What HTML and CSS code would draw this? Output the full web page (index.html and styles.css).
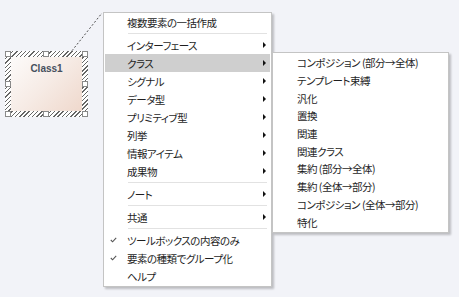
FILE: index.html
```html
<!DOCTYPE html>
<html lang="ja">
    <head>
        <meta charset="UTF-8" />
        <meta name="viewport" content="width=device-width, initial-scale=1.0" />
        <title>diagram context menu</title>
        <link rel="stylesheet" href="styles.css">
    </head>
    <body>
        <main class="canvas">
            <svg class="link" width="459" height="297" viewBox="0 0 459 297">
                <line x1="67" y1="57" x2="102" y2="13" />
            </svg>
            <div class="element">
                <div class="element-body">Class1</div>
                <span class="handle h-tl"></span>
                <span class="handle h-tc"></span>
                <span class="handle h-tr"></span>
                <span class="handle h-ml"></span>
                <span class="handle h-mr"></span>
                <span class="handle h-bl"></span>
                <span class="handle h-bc"></span>
                <span class="handle h-br"></span>
            </div>
            <ul class="menu menu-main">
                <li class="item"><span class="gutter"></span>複数要素の一括作成</li>
                <li class="sep"></li>
                <li class="item sub"><span class="gutter"></span>インターフェース<i class="arrow"></i></li>
                <li class="item sub active"><span class="gutter"></span>クラス<i class="arrow"></i></li>
                <li class="item sub"><span class="gutter"></span>シグナル<i class="arrow"></i></li>
                <li class="item sub"><span class="gutter"></span>データ型<i class="arrow"></i></li>
                <li class="item sub"><span class="gutter"></span>プリミティブ型<i class="arrow"></i></li>
                <li class="item sub"><span class="gutter"></span>列挙<i class="arrow"></i></li>
                <li class="item sub"><span class="gutter"></span>情報アイテム<i class="arrow"></i></li>
                <li class="item sub"><span class="gutter"></span>成果物<i class="arrow"></i></li>
                <li class="sep"></li>
                <li class="item sub"><span class="gutter"></span>ノート<i class="arrow"></i></li>
                <li class="sep"></li>
                <li class="item sub"><span class="gutter"></span>共通<i class="arrow"></i></li>
                <li class="sep"></li>
                <li class="item"><span class="gutter"><svg class="check" width="7" height="6" viewBox="0 0 7 6"><polyline points="0.8,3 2.6,4.8 6.2,0.8" /></svg></span>ツールボックスの内容のみ</li>
                <li class="item"><span class="gutter"><svg class="check" width="7" height="6" viewBox="0 0 7 6"><polyline points="0.8,3 2.6,4.8 6.2,0.8" /></svg></span>要素の種類でグループ化</li>
                <li class="item"><span class="gutter"></span>ヘルプ</li>
            </ul>
            <ul class="menu menu-sub">
                <li class="item">コンポジション (部分→全体)</li>
                <li class="item">テンプレート束縛</li>
                <li class="item">汎化</li>
                <li class="item">置換</li>
                <li class="item">関連</li>
                <li class="item">関連クラス</li>
                <li class="item">集約 (部分→全体)</li>
                <li class="item">集約 (全体→部分)</li>
                <li class="item">コンポジション (全体→部分)</li>
                <li class="item">特化</li>
            </ul>
        </main>
    </body>
</html>
```

FILE: styles.css
```css
* {
    box-sizing: border-box;
}
body {
    margin: 0;
    background-color: #f2f3f8;
    color: #1e1e1e;
    font-family: "Noto Sans CJK JP", "Noto Sans", sans-serif;
}
.canvas {
    position: relative;
    width: 459px;
    height: 297px;
    overflow: hidden;
}
.link {
    position: absolute;
    left: 0;
    top: 0;
}
.link line {
    stroke: #505050;
    stroke-width: 1;
    stroke-dasharray: 2 2;
}
.element {
    position: absolute;
    left: 5px;
    top: 51px;
    width: 83px;
    height: 66px;
    padding: 6px;
    background: repeating-linear-gradient(-45deg, #666 0 1px, #ffffff 1px 3px);
}
.element-body {
    height: 100%;
    padding-top: 6px;
    background: linear-gradient(135deg, #fdfbfa 0%, #f6ebe5 50%, #efd8cc 100%);
    color: #46505e;
    font-family: "Liberation Sans", Arial, sans-serif;
    font-size: 10px;
    font-weight: bold;
    line-height: 12px;
    text-align: center;
}
.handle {
    position: absolute;
    width: 6px;
    height: 6px;
    border: 1px solid #8a8a8a;
    background-color: #fff;
}
.h-tl { left: 0; top: 0; }
.h-tc { left: 38px; top: 0; }
.h-tr { right: 0; top: 0; }
.h-ml { left: 0; top: 30px; }
.h-mr { right: 0; top: 30px; }
.h-bl { left: 0; bottom: 0; }
.h-bc { left: 38px; bottom: 0; }
.h-br { right: 0; bottom: 0; }
.menu {
    position: absolute;
    margin: 0;
    padding: 0 1px;
    list-style: none;
    background-color: #fff;
    border: 1px solid #c4c4c4;
    box-shadow: 2px 2px 2px rgba(0, 0, 0, 0.22);
    font-size: 10.5px;
    letter-spacing: -0.5px;
    font-feature-settings: "palt";
}
.menu-main {
    left: 103px;
    top: 12px;
    width: 169px;
    height: 275px;
}
.menu-sub {
    left: 272px;
    top: 52px;
    width: 177px;
    height: 181px;
    padding-top: 1px;
}
.item {
    display: flex;
    align-items: center;
    height: 18px;
    white-space: nowrap;
}
.menu-sub .item {
    height: 17.7px;
    padding-left: 23px;
}
.item.active {
    background-color: #cfcfcf;
}
.gutter {
    display: flex;
    align-items: center;
    width: 22px;
    height: 100%;
    padding-left: 5px;
    flex-shrink: 0;
}
.check polyline {
    fill: none;
    stroke: #555;
    stroke-width: 1.1;
}
.arrow {
    margin-left: auto;
    margin-right: 4px;
    width: 0;
    height: 0;
    border-top: 3px solid transparent;
    border-bottom: 3px solid transparent;
    border-left: 3px solid #111;
}
.sep {
    height: 5px;
    padding: 2px 3px 0 23px;
}
.sep::before {
    content: "";
    display: block;
    height: 1px;
    background-color: #e2e2e2;
}
```
